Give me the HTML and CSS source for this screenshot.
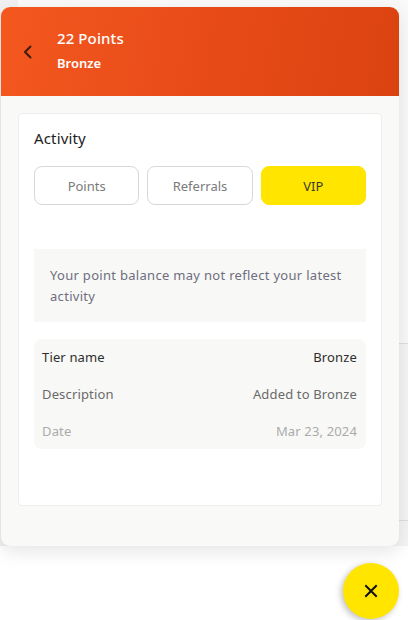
FILE: index.html
```html
<!DOCTYPE html>
<html>
<head>
<meta charset="utf-8">
<link rel="stylesheet" href="styles.css">
</head>
<body>
<div class="backdrop">
  <div class="bd-side"></div>
  <div class="bd-main">
    <div class="bd-row bd-row-a"></div>
    <div class="bd-row bd-row-b"></div>
    <div class="bd-row bd-row-c"></div>
  </div>
</div>

<div class="panel">
  <header class="head">
    <button class="back" aria-label="Back">
      <svg width="12" height="14" viewBox="0 0 12 14"><path d="M8.5 1.5 L3 7 L8.5 12.5" fill="none" stroke="#3b1d12" stroke-width="2" stroke-linecap="round" stroke-linejoin="round"/></svg>
    </button>
    <div class="head-text">
      <div class="points">22 Points</div>
      <div class="tier">Bronze</div>
    </div>
  </header>
  <div class="body">
    <section class="card">
      <h2 class="title">Activity</h2>
      <div class="tabs">
        <button class="tab">Points</button>
        <button class="tab">Referrals</button>
        <button class="tab active">VIP</button>
      </div>
      <div class="notice">Your point balance may not reflect your latest activity</div>
      <div class="details">
        <div class="row r1"><span>Tier name</span><span>Bronze</span></div>
        <div class="row r2"><span>Description</span><span>Added to Bronze</span></div>
        <div class="row r3"><span>Date</span><span>Mar 23, 2024</span></div>
      </div>
    </section>
  </div>
</div>

<button class="fab" aria-label="Close">
  <svg width="14" height="14" viewBox="0 0 14 14"><path d="M2 2 L12 12 M12 2 L2 12" stroke="#111" stroke-width="2" stroke-linecap="square"/></svg>
</button>
</body>
</html>
```
FILE: styles.css
```css
* { box-sizing: border-box; }
html, body { margin: 0; padding: 0; }
body {
  width: 408px;
  height: 620px;
  overflow: hidden;
  background: #ffffff;
  font-family: "Noto Sans", "Open Sans", sans-serif;
  position: relative;
}
.backdrop {
  display: flex;
  height: 546px;
}
.bd-side {
  width: 18px;
  background: #f0f0f0;
}
.bd-main {
  flex: 1;
  display: flex;
  flex-direction: column;
  background: #f4f4f4;
}
.bd-row { border-bottom: 1px solid #dedede; }
.bd-row-a { height: 344px; background: #f9f9f9; }
.bd-row-b { height: 177px; }
.bd-row-c { flex: 1; border-bottom: none; }

.panel {
  position: absolute;
  left: 1px;
  top: 7px;
  width: 398px;
  height: 539px;
  border-radius: 9px;
  overflow: hidden;
  background: #f9f9f7;
  box-shadow: 0 6px 18px rgba(0,0,0,0.10);
  display: flex;
  flex-direction: column;
}
.head {
  height: 89px;
  background: linear-gradient(100deg, #f4581f 0%, #e84b18 50%, #da4310 100%);
  display: flex;
  align-items: center;
  padding-left: 20px;
  padding-bottom: 4px;
}
.back {
  border: 0;
  background: none;
  padding: 0;
  width: 14px;
  height: 14px;
  display: flex;
  align-items: center;
  justify-content: center;
  margin-right: 22px;
  margin-top: 4px;
}
.head-text { color: #fff; }
.points {
  font-size: 15px;
  font-weight: 500;
  line-height: 20px;
  letter-spacing: 0.1px;
}
.tier {
  font-size: 13px;
  font-weight: 600;
  line-height: 18px;
  margin-top: 6px;
}
.body {
  flex: 1;
  padding: 17px 17px 40px;
  display: flex;
}
.card {
  flex: 1;
  background: #fff;
  border: 1px solid #eeeeec;
  border-radius: 4px;
  padding: 14px 15px 0;
}
.title {
  margin: 0;
  font-size: 15px;
  font-weight: 400;
  line-height: 20px;
  color: #222;
  letter-spacing: 0.15px;
}
.tabs {
  margin-top: 18px;
  display: grid;
  grid-template-columns: 1fr 1fr 1fr;
  gap: 8px;
}
.tab {
  height: 39px;
  border: 1px solid #d8d8d8;
  border-radius: 8px;
  background: #fff;
  font-family: inherit;
  font-size: 13px;
  color: #7a7a7a;
}
.tab.active {
  background: #ffe500;
  border-color: #ffe500;
  color: #3a3a2a;
}
.notice {
  margin-top: 44px;
  background: #f8f8f6;
  padding: 16px 16px 15px;
  font-size: 13px;
  line-height: 21px;
  color: #6e6e7e;
  letter-spacing: 0.3px;
}
.details {
  margin-top: 17px;
  background: #f8f8f6;
  border-radius: 8px;
  padding: 8px 9px 8px 8px;
  height: 110px;
  display: flex;
  flex-direction: column;
  justify-content: space-between;
}
.row {
  display: flex;
  justify-content: space-between;
  font-size: 13px;
  line-height: 20px;
  letter-spacing: 0.15px;
}
.r1 { color: #2e2e2e; }
.r2 { color: #6a6a6a; }
.r3 { color: #ababab; }

.fab {
  position: absolute;
  left: 343px;
  top: 563px;
  width: 56px;
  height: 56px;
  border-radius: 50%;
  border: 0;
  background: #ffe500;
  box-shadow: -2px 2px 6px rgba(0,0,0,0.25);
  display: flex;
  align-items: center;
  justify-content: center;
  padding: 0;
}
```
